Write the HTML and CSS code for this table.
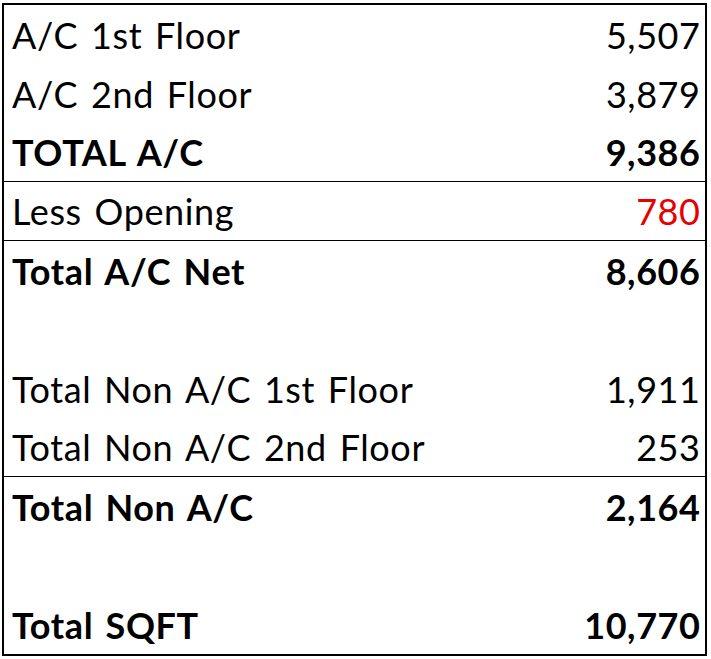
FILE: index.html
```html
<!DOCTYPE html>
<html>
<head>
<meta charset="utf-8">
<link rel="stylesheet" href="styles.css">
</head>
<body>
<div class="sheet">
  <div class="row"><span class="label">A/C 1st Floor</span><span class="num">5,507</span></div>
  <div class="row"><span class="label">A/C 2nd Floor</span><span class="num">3,879</span></div>
  <div class="row bold sep"><span class="label">TOTAL A/C</span><span class="num">9,386</span></div>
  <div class="row sep"><span class="label">Less Opening</span><span class="num red">780</span></div>
  <div class="row bold"><span class="label">Total A/C Net</span><span class="num">8,606</span></div>
  <div class="row"></div>
  <div class="row"><span class="label">Total Non A/C 1st Floor</span><span class="num">1,911</span></div>
  <div class="row sep"><span class="label">Total Non A/C 2nd Floor</span><span class="num">253</span></div>
  <div class="row bold"><span class="label">Total Non A/C</span><span class="num">2,164</span></div>
  <div class="row"></div>
  <div class="row bold"><span class="label">Total SQFT</span><span class="num">10,770</span></div>
</div>
</body>
</html>
```
FILE: styles.css
```css
html, body {
  margin: 0;
  padding: 0;
  background: #fff;
}
.sheet {
  box-sizing: border-box;
  margin: 3px 0 0 2px;
  width: 705px;
  border: 2px solid #000;
  font-family: Lato, "Open Sans", sans-serif;
  font-size: 36px;
  letter-spacing: 0.6px;
  word-spacing: 3px;
  color: #000;
  display: flex;
  flex-direction: column;
}
.row {
  box-sizing: border-box;
  height: 59px;
  display: flex;
  align-items: center;
  justify-content: space-between;
  padding: 0 5px 0 8px;
  line-height: 1;
}
.num {
  margin-right: -0.6px;
}
.row.sep {
  border-bottom: 1px solid #000;
}
.row.bold {
  font-weight: 700;
}
.red {
  color: #e60000;
}
```
